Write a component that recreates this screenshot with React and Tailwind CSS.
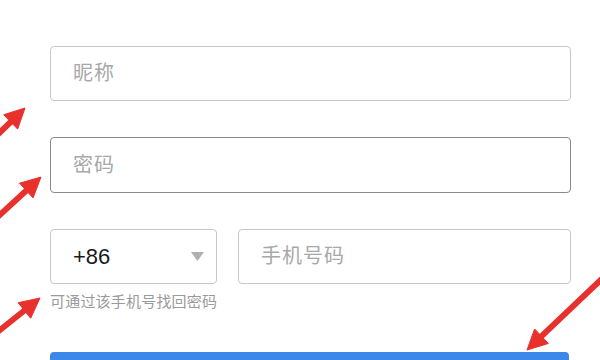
// App.jsx
const font = { fontFamily: '"Liberation Sans", "Noto Sans CJK SC", sans-serif' };

const Arrow = ({ from, to }) => {
  const [x1, y1] = from;
  const [x2, y2] = to;
  const len = Math.hypot(x2 - x1, y2 - y1);
  const ux = (x2 - x1) / len;
  const uy = (y2 - y1) / len;
  const head = 20;
  const half = 10;
  const bx = x2 - ux * head;
  const by = y2 - uy * head;
  const pts = [
    [x2, y2],
    [bx - uy * half, by + ux * half],
    [bx + uy * half, by - ux * half],
  ]
    .map((p) => p.join(","))
    .join(" ");
  return (
    <g fill="#e8302c" stroke="#e8302c">
      <line x1={x1} y1={y1} x2={bx + ux * 2} y2={by + uy * 2} strokeWidth="6" />
      <polygon points={pts} strokeWidth="1" strokeLinejoin="round" />
    </g>
  );
};

const App = () => {
  return (
    <div className="relative w-[600px] h-[360px] overflow-hidden bg-white" style={font}>
      <div className="flex flex-col pl-[50px] pt-[46px] w-[571px]">
        <input
          type="text"
          placeholder="昵称"
          className="h-[55px] w-full rounded-[4px] border border-[#c8c8c8] px-[22px] text-[20px] tracking-[1px] text-[#333] placeholder:text-[#a8a8a8] outline-none"
        />
        <input
          type="password"
          placeholder="密码"
          className="mt-[36px] h-[56px] w-full rounded-[4px] border border-[#8a8a8a] px-[22px] text-[20px] tracking-[1px] text-[#333] placeholder:text-[#a8a8a8] outline-none"
        />
        <div className="mt-[36px] flex gap-[21px]">
          <div className="flex h-[55px] w-[167px] items-center justify-between rounded-[4px] border border-[#c8c8c8] pl-[22px] pr-[12px]">
            <span className="text-[22px] text-[#1a1a1a]">+86</span>
            <svg width="13" height="9" viewBox="0 0 13 9">
              <polygon points="0,0 13,0 6.5,9" fill="#b0b0b0" />
            </svg>
          </div>
          <input
            type="text"
            placeholder="手机号码"
            className="h-[55px] flex-1 min-w-0 rounded-[4px] border border-[#c8c8c8] px-[22px] text-[20px] tracking-[1px] text-[#333] placeholder:text-[#a8a8a8] outline-none"
          />
        </div>
        <p className="mt-[8px] text-[15px] leading-[20px] tracking-[0.2px] text-[#9a9a9a]">
          可通过该手机号找回密码
        </p>
        <button className="mt-[40px] h-[48px] w-[519px] rounded-[4px] bg-[#3b87ea]" />
      </div>

      <svg className="pointer-events-none absolute inset-0" width="600" height="360">
        <Arrow from={[-10, 142]} to={[25, 108]} />
        <Arrow from={[-10, 224]} to={[41, 177]} />
        <Arrow from={[-10, 338]} to={[40, 298]} />
        <Arrow from={[610, 271]} to={[527, 350]} />
      </svg>
    </div>
  );
};

export default App;
